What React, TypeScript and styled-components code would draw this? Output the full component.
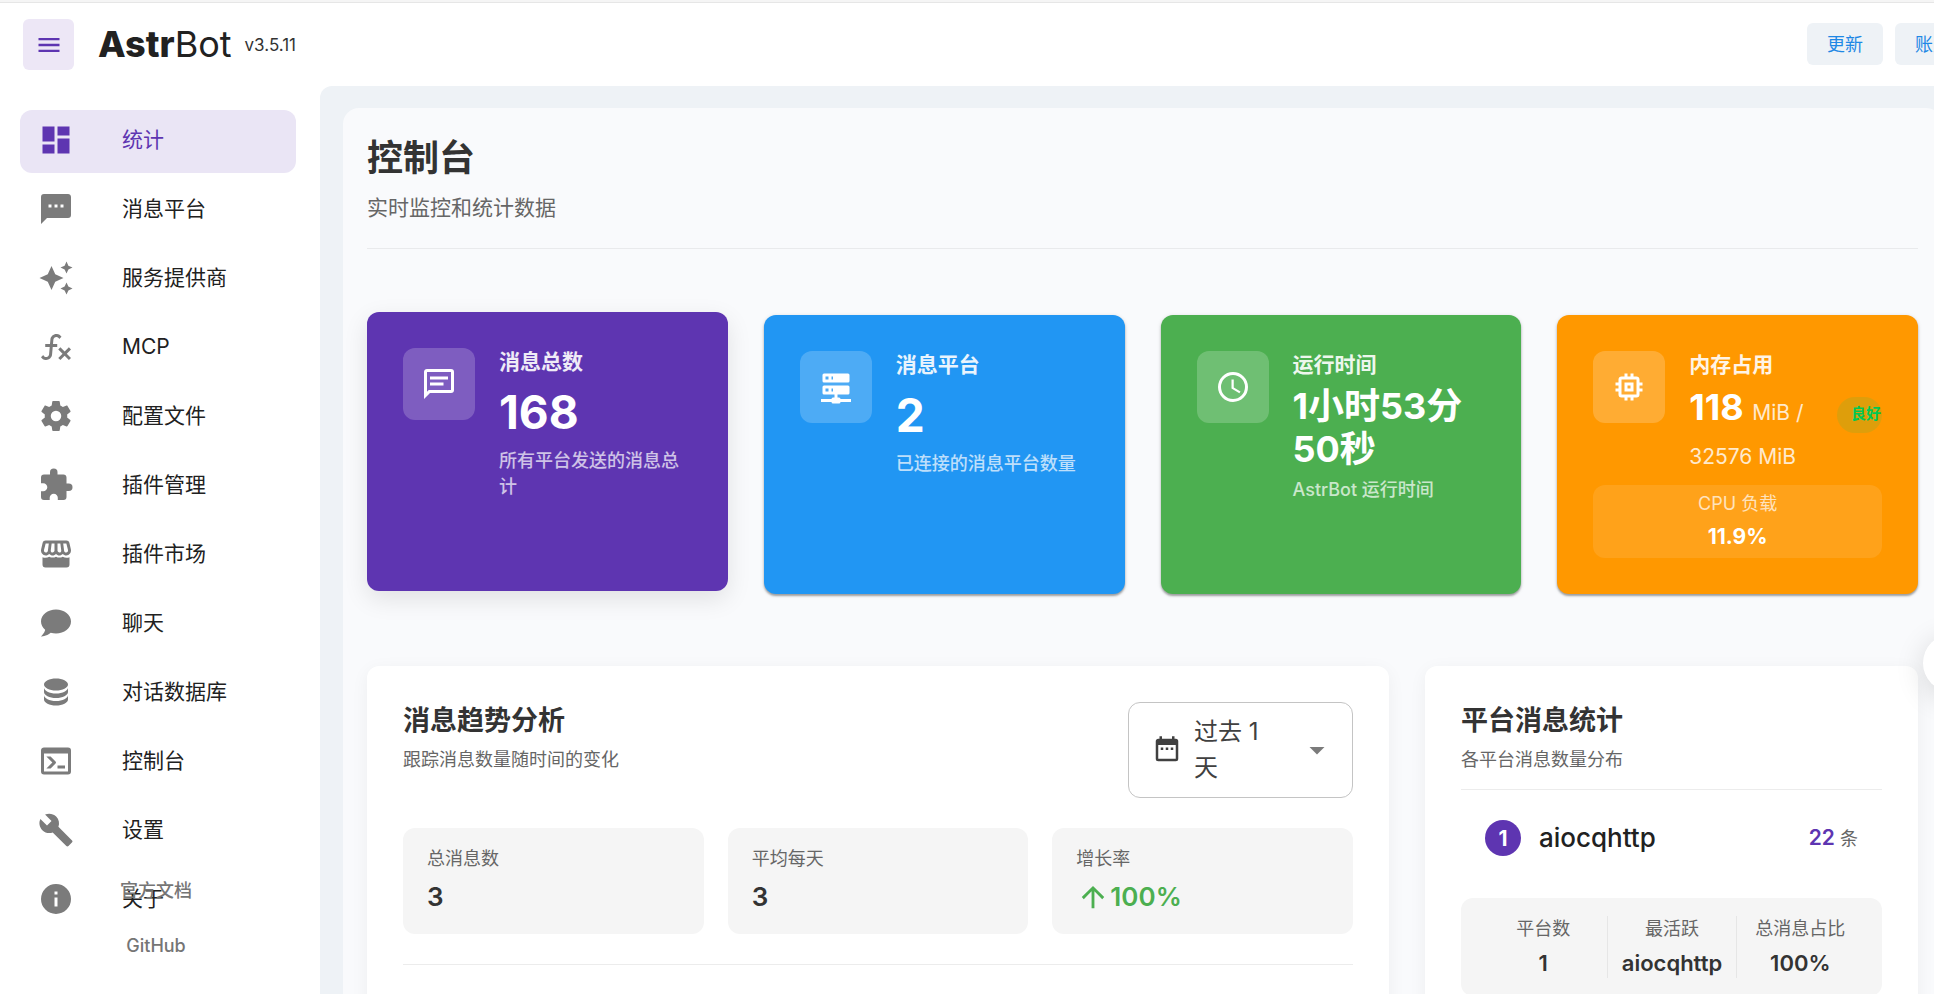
import React from 'react';
import styled, { createGlobalStyle, css } from 'styled-components';

const GlobalStyle = createGlobalStyle`
  *, *::before, *::after { box-sizing: border-box; }
  html, body { margin: 0; height: 100%; overflow: hidden; background: #fff; }
  body, button, select {
    font-family: Inter, "Noto Sans CJK SC", sans-serif;
  }
  h1, h2, p, ul, dl, dt, dd { margin: 0; padding: 0; }
  button { border: 0; cursor: pointer; }
`;

const icons = {
  menu: 'M3,6H21V8H3V6M3,11H21V13H3V11M3,16H21V18H3V16Z',
  dashboard: 'M13,3V9H21V3M13,21H21V11H13M3,21H11V15H3M3,13H11V3H3V13Z',
  message:
    'M17,11H15V9H17M13,11H11V9H13M9,11H7V9H9M20,2H4A2,2 0 0,0 2,4V22L6,18H20A2,2 0 0,0 22,16V4C22,2.89 21.1,2 20,2Z',
  creation:
    'M19,1L17.74,3.75L15,5L17.74,6.26L19,9L20.25,6.26L23,5L20.25,3.75M9,4L6.5,9.5L1,12L6.5,14.5L9,20L11.5,14.5L17,12L11.5,9.5M19,15L17.74,17.74L15,19L17.74,20.25L19,23L20.25,20.25L23,19L20.25,17.74',
  fx: 'M12.42,5.29C11.32,5.19 10.35,6 10.25,7.11L10,10H12.82V12H9.82L9.38,17.07C9.18,19.27 7.24,20.9 5.04,20.7C3.79,20.59 2.66,19.9 2,18.83L3.5,17.33C3.83,18.38 4.96,18.97 6,18.63C6.78,18.39 7.33,17.7 7.4,16.89L7.82,12H4.82V10H8L8.27,6.93C8.46,4.73 10.39,3.1 12.6,3.28C13.86,3.39 15,4.09 15.66,5.17L14.16,6.67C13.91,5.9 13.23,5.36 12.42,5.29M22,13.65L20.59,12.24L17.76,15.07L14.93,12.24L13.5,13.65L16.35,16.5L13.5,19.31L14.93,20.72L17.76,17.9L20.59,20.72L22,19.31L19.17,16.5L22,13.65Z',
  cog: 'M12,15.5A3.5,3.5 0 0,1 8.5,12A3.5,3.5 0 0,1 12,8.5A3.5,3.5 0 0,1 15.5,12A3.5,3.5 0 0,1 12,15.5M19.43,12.97C19.47,12.65 19.5,12.33 19.5,12C19.5,11.67 19.47,11.34 19.43,11L21.54,9.37C21.73,9.22 21.78,8.95 21.66,8.73L19.66,5.27C19.54,5.05 19.27,4.96 19.05,5.05L16.56,6.05C16.04,5.66 15.5,5.32 14.87,5.07L14.5,2.42C14.46,2.18 14.25,2 14,2H10C9.75,2 9.54,2.18 9.5,2.42L9.13,5.07C8.5,5.32 7.96,5.66 7.44,6.05L4.95,5.05C4.73,4.96 4.46,5.05 4.34,5.27L2.34,8.73C2.21,8.95 2.27,9.22 2.46,9.37L4.57,11C4.53,11.34 4.5,11.67 4.5,12C4.5,12.33 4.53,12.65 4.57,12.97L2.46,14.63C2.27,14.78 2.21,15.05 2.34,15.27L4.34,18.73C4.46,18.95 4.73,19.03 4.95,18.95L7.44,17.94C7.96,18.34 8.5,18.68 9.13,18.93L9.5,21.58C9.54,21.82 9.75,22 10,22H14C14.25,22 14.46,21.82 14.5,21.58L14.87,18.93C15.5,18.67 16.04,18.34 16.56,17.94L19.05,18.95C19.27,19.03 19.54,18.95 19.66,18.73L21.66,15.27C21.78,15.05 21.73,14.78 21.54,14.63L19.43,12.97Z',
  puzzle:
    'M20.5,11H19V7C19,5.89 18.1,5 17,5H13V3.5A2.5,2.5 0 0,0 10.5,1A2.5,2.5 0 0,0 8,3.5V5H4A2,2 0 0,0 2,7V10.8H3.5C5,10.8 6.2,12 6.2,13.5C6.2,15 5,16.2 3.5,16.2H2V20A2,2 0 0,0 4,22H7.8V20.5C7.8,19 9,17.8 10.5,17.8C12,17.8 13.2,19 13.2,20.5V22H17A2,2 0 0,0 19,20V16H20.5A2.5,2.5 0 0,0 23,13.5A2.5,2.5 0 0,0 20.5,11Z',
  storefront:
    'M5.1,3H18.9C19.9,3 20.6,3.6 20.9,4.5L21.9,8.9C22.4,11.1 20.9,13 18.8,13C17.9,13 17.1,12.6 16.5,12C15.9,12.6 15.1,13 14.2,13C13.3,13 12.6,12.6 12,12C11.4,12.6 10.7,13 9.8,13C8.9,13 8.1,12.6 7.5,12C6.9,12.6 6.1,13 5.2,13C3.1,13 1.6,11.1 2.1,8.9L3.1,4.5C3.4,3.6 4.1,3 5.1,3M5.1,5L4,9.4C3.8,10.3 4.4,11 5.2,11C6,11 6.5,10.5 6.6,9.8L7.2,5H5.1M9.1,5L8.5,9.6C8.4,10.4 8.9,11 9.7,11C10.4,11 11,10.4 11,9.7V5H9.1M13,5V9.7C13,10.4 13.6,11 14.3,11C15.1,11 15.6,10.4 15.5,9.6L14.9,5H13M16.8,5L17.4,9.8C17.5,10.5 18,11 18.8,11C19.6,11 20.2,10.3 20,9.4L18.9,5H16.8M3,14.1C4.6,14.7 6.2,14.5 7.5,13.8C9,14.6 10.6,14.6 12,13.8C13.4,14.6 15,14.6 16.5,13.8C17.8,14.5 19.4,14.7 21,14.1V19A2,2 0 0,1 19,21H5A2,2 0 0,1 3,19V14.1Z',
  chat: 'M12,3C17.5,3 22,6.58 22,11C22,15.42 17.5,19 12,19C10.76,19 9.57,18.82 8.47,18.5C5.55,21 2,21 2,21C4.33,18.67 4.7,17.1 4.75,16.5C3.05,15.07 2,13.13 2,11C2,6.58 6.5,3 12,3Z',
  database:
    'M12,3C7.58,3 4,4.79 4,7C4,9.21 7.58,11 12,11C16.42,11 20,9.21 20,7C20,4.79 16.42,3 12,3M4,9V12C4,14.21 7.58,16 12,16C16.42,16 20,14.21 20,12V9C20,11.21 16.42,13 12,13C7.58,13 4,11.21 4,9M4,14V17C4,19.21 7.58,21 12,21C16.42,21 20,19.21 20,17V14C20,16.21 16.42,18 12,18C7.58,18 4,16.21 4,14Z',
  console:
    'M20,19V7H4V19H20M20,3A2,2 0 0,1 22,5V19A2,2 0 0,1 20,21H4A2,2 0 0,1 2,19V5C2,3.89 2.9,3 4,3H20M13,17V15H18V17H13M9.58,13L5.57,9H8.4L11.7,12.3C12.09,12.69 12.09,13.33 11.7,13.72L8.42,17H5.59L9.58,13Z',
  wrench:
    'M22.7,19L13.6,9.9C14.5,7.6 14,4.9 12.1,3C10.1,1 7.1,0.6 4.7,1.7L9,6L6,9L1.6,4.7C0.4,7.1 0.9,10.1 2.9,12.1C4.8,14 7.5,14.5 9.8,13.6L18.9,22.7C19.3,23.1 19.9,23.1 20.3,22.7L22.6,20.4C23.1,20 23.1,19.3 22.7,19Z',
  info: 'M13,9H11V7H13M13,17H11V11H13M12,2A10,10 0 0,0 2,12A10,10 0 0,0 12,22A10,10 0 0,0 22,12A10,10 0 0,0 12,2Z',
  messageText:
    'M20,2A2,2 0 0,1 22,4V16A2,2 0 0,1 20,18H6L2,22V4C2,2.89 2.9,2 4,2H20M4,4V17.17L5.17,16H20V4H4M6,7H18V9H6V7M6,11H15V13H6V11Z',
  server:
    'M13,19H14A1,1 0 0,1 15,20H22V22H15A1,1 0 0,1 14,23H10A1,1 0 0,1 9,22H2V20H9A1,1 0 0,1 10,19H11V17H4A1,1 0 0,1 3,16V12A1,1 0 0,1 4,11H20A1,1 0 0,1 21,12V16A1,1 0 0,1 20,17H13V19M4,3H20A1,1 0 0,1 21,4V8A1,1 0 0,1 20,9H4A1,1 0 0,1 3,8V4A1,1 0 0,1 4,3M9,7H10V5H9V7M9,15H10V13H9V15M5,5V7H7V5H5M5,13V15H7V13H5Z',
  clock:
    'M12,20A8,8 0 0,0 20,12A8,8 0 0,0 12,4A8,8 0 0,0 4,12A8,8 0 0,0 12,20M12,2A10,10 0 0,1 22,12A10,10 0 0,1 12,22C6.47,22 2,17.5 2,12A10,10 0 0,1 12,2M12.5,7V12.25L17,14.92L16.25,16.15L11,13V7H12.5Z',
  memory:
    'M17,17H7V7H17M21,11V9H19V7C19,5.89 18.1,5 17,5H15V3H13V5H11V3H9V5H7C5.89,5 5,5.89 5,7V9H3V11H5V13H3V15H5V17A2,2 0 0,0 7,19H9V21H11V19H13V21H15V19H17A2,2 0 0,0 19,17V15H21V13H19V11M13,13H11V11H13M15,9H9V15H15V9Z',
  calendar:
    'M9,10H7V12H9V10M13,10H11V12H13V10M17,10H15V12H17V10M19,3H18V1H16V3H8V1H6V3H5C3.89,3 3,3.9 3,5V19A2,2 0 0,0 5,21H19A2,2 0 0,0 21,19V5A2,2 0 0,0 19,3M19,19H5V8H19V19Z',
  arrowUp: 'M13,20H11V8L5.5,13.5L4.08,12.08L12,4.16L19.92,12.08L18.5,13.5L13,8V20Z',
  caret: 'M7,10L12,15L17,10H7Z',
};

type IconName = keyof typeof icons;

const Svg = styled.svg`
  display: block;
  flex: none;
  fill: currentColor;
`;

const Icon = ({ name, size = 36 }: { name: IconName; size?: number }) => (
  <Svg width={size} height={size} viewBox="0 0 24 24" fillRule="evenodd" aria-hidden="true">
    <path d={icons[name]} />
  </Svg>
);

/* ---------- shell ---------- */

const Shell = styled.div`
  display: flex;
  flex-direction: column;
  width: calc(100% + 48px);
  height: 100vh;
  border-top: 2px solid #f5f5f5;
  color: #212121;
`;

const Header = styled.header`
  display: flex;
  flex: none;
  align-items: center;
  height: 84px;
  padding: 0 11px 0 23px;
  border-top: 1px solid #e6e6e6;
`;

const MenuButton = styled.button`
  display: grid;
  place-items: center;
  width: 51px;
  height: 51px;
  padding: 0;
  border-radius: 6px;
  background: #ede7f6;
  color: #5e35b1;
`;

const Brand = styled.h1`
  margin: 0 0 2px 24px;
  font-size: 36px;
  line-height: 48px;
  font-weight: 400;

  b {
    font-weight: 800;
  }
`;

const Version = styled.span`
  margin-left: 13px;
  font-size: 17px;
  line-height: 26px;
  color: #333;
`;

const HeaderActions = styled.div`
  display: flex;
  gap: 12px;
  margin: 0 0 1px auto;
`;

const HeaderButton = styled.button`
  height: 42px;
  padding: 0 20px 2px;
  border-radius: 6px;
  background: #eef2f6;
  color: #1e88e5;
  font-size: 18px;
  white-space: nowrap;
`;

const Body = styled.div`
  display: flex;
  flex: 1;
  min-height: 0;
`;

const Sidebar = styled.aside`
  position: relative;
  flex: none;
  width: 320px;
  padding: 24px 24px 0 20px;
`;

const NavList = styled.ul`
  display: flex;
  flex-direction: column;
  gap: 6px;
  list-style: none;
`;

const NavLink = styled.a<{ $active?: boolean }>`
  display: flex;
  align-items: center;
  gap: 48px;
  height: 63px;
  padding: 0 18px 3px;
  border-radius: 12px;
  font-size: 21px;
  line-height: 30px;
  text-decoration: none;
  color: #212121;

  svg {
    color: #7b7b7b;
  }

  ${(p) =>
    p.$active &&
    css`
      background: #eae5f5;
      color: #5e35b1;

      svg {
        color: #5e35b1;
      }
    `}
`;

const SidebarFooter = styled.div`
  position: absolute;
  left: 0;
  right: 8px;
  bottom: 21px;
  display: flex;
  flex-direction: column;
  align-items: center;
`;

const FooterLink = styled.a`
  display: flex;
  align-items: center;
  height: 55px;
  padding: 0 24px;
  font-size: 18px;
  line-height: 26px;
  font-weight: 500;
  text-decoration: none;
  color: #757575;
`;

const Main = styled.main`
  flex: 1;
  min-width: 0;
  padding: 22px 40px 0 23px;
  border-top-left-radius: 12px;
  background: #eef2f6;
  overflow: hidden;
`;

const Panel = styled.div`
  min-height: 100%;
  padding: 24px;
  border-radius: 16px;
  background: #f9fafc;
`;

const PageHead = styled.div`
  padding-bottom: 23px;
  border-bottom: 1px solid #e9eaec;
`;

const PageTitle = styled.h2`
  font-size: 36px;
  line-height: 52px;
  font-weight: 700;
  color: #333;
`;

const PageSubtitle = styled.p`
  margin-top: 7px;
  font-size: 21px;
  line-height: 34px;
  color: #666;
`;

/* ---------- stat cards ---------- */

const StatGrid = styled.section`
  display: grid;
  grid-template-columns: repeat(4, minmax(0, 1fr));
  gap: 36px;
  margin-top: 66px;
`;

const StatCard = styled.article<{ $color: string; $raised?: boolean }>`
  min-height: 279px;
  padding: 36px;
  border-radius: 12px;
  background: ${(p) => p.$color};
  color: #fff;
  box-shadow: 0 2px 2px rgba(0, 0, 0, 0.3), 0 1px 4px rgba(0, 0, 0, 0.14);

  ${(p) =>
    p.$raised &&
    css`
      transform: translateY(-3px);
      box-shadow: 0 8px 24px rgba(0, 0, 0, 0.1);
    `}
`;

const StatTop = styled.div`
  display: flex;
  align-items: flex-start;
  gap: 24px;
`;

const IconTile = styled.div`
  display: grid;
  flex: none;
  place-items: center;
  width: 72px;
  height: 72px;
  border-radius: 12px;
  background: rgba(255, 255, 255, 0.2);
`;

const StatText = styled.div`
  flex: 1;
  min-width: 0;
`;

const StatLabel = styled.div`
  height: 28px;
  margin-bottom: 6px;
  font-size: 21px;
  line-height: 28px;
  font-weight: 600;
  opacity: 0.9;
`;

const StatValue = styled.div<{ $large?: boolean }>`
  font-size: ${(p) => (p.$large ? 46 : 36)}px;
  line-height: ${(p) => (p.$large ? 60 : 43)}px;
  font-weight: 700;
`;

const StatNote = styled.p`
  margin-top: 6px;
  font-size: 18px;
  line-height: 26px;
  font-weight: 500;
  opacity: 0.7;
`;

const MemoryRow = styled.div`
  display: flex;
  align-items: flex-start;
`;

const MemoryValue = styled(StatValue)`
  flex: 1;
  min-width: 0;
  line-height: 44px;
`;

const Unit = styled.span`
  font-size: 21px;
  line-height: 24px;
  font-weight: 400;
  opacity: 0.8;
`;

const Chip = styled.span`
  flex: none;
  width: 45px;
  height: 36px;
  margin-top: 12px;
  padding-left: 14px;
  border-radius: 18px;
  background: rgba(0, 200, 83, 0.13);
  color: #00c853;
  font-size: 15px;
  line-height: 34px;
  font-weight: 600;
  white-space: nowrap;
  overflow: hidden;
`;

const LoadBox = styled.div`
  height: 73px;
  margin-top: 12px;
  padding-top: 3px;
  border-radius: 12px;
  background: rgba(255, 255, 255, 0.1);
  text-align: center;
`;

const LoadLabel = styled.div`
  font-size: 18px;
  line-height: 32px;
  opacity: 0.7;
`;

const LoadValue = styled.div`
  font-size: 21px;
  line-height: 34px;
  font-weight: 700;
`;

/* ---------- lower cards ---------- */

const ChartGrid = styled.section`
  display: grid;
  grid-template-columns: repeat(12, minmax(0, 1fr));
  gap: 36px;
  margin-top: 72px;
`;

const Card = styled.article<{ $span: number }>`
  grid-column: span ${(p) => p.$span};
  min-height: 720px;
  padding: 36px;
  border-radius: 12px;
  background: #fff;
  box-shadow: 0 4px 18px rgba(0, 0, 0, 0.05);
`;

const CardHead = styled.div`
  display: flex;
  justify-content: space-between;
  align-items: flex-start;
`;

const CardTitle = styled.h2`
  font-size: 27px;
  line-height: 38px;
  font-weight: 700;
  color: #333;
`;

const CardSubtitle = styled.p`
  margin-top: 6px;
  font-size: 18px;
  line-height: 28px;
  color: #666;
`;

const Divider = styled.hr<{ $top: number }>`
  height: 1px;
  margin: ${(p) => p.$top}px 0 0;
  border: 0;
  background: #ececec;
`;

const SelectBox = styled.label`
  position: relative;
  display: flex;
  align-items: center;
  width: 225px;
  height: 96px;
  padding: 0 17px 0 23px;
  border: 1px solid #c4c4c4;
  border-radius: 12px;
  color: #404040;
`;

const SelectText = styled.span`
  width: 72px;
  margin: 0 auto 0 12px;
  font-size: 24px;
  line-height: 36px;
`;

const Caret = styled.span`
  color: #7b7b7b;
`;

const NativeSelect = styled.select`
  position: absolute;
  inset: 0;
  width: 100%;
  height: 100%;
  opacity: 0;
  cursor: pointer;
`;

const MetricGrid = styled.dl`
  display: grid;
  grid-template-columns: repeat(3, minmax(0, 1fr));
  gap: 24px;
  margin-top: 30px;
`;

const Metric = styled.div`
  padding: 18px 24px 16px;
  border-radius: 12px;
  background: #f5f5f5;
`;

const MetricLabel = styled.dt`
  height: 26px;
  font-size: 18px;
  line-height: 26px;
  color: #666;
`;

const MetricValue = styled.dd<{ $up?: boolean }>`
  display: flex;
  align-items: center;
  margin-top: 4px;
  font-size: 26px;
  line-height: 42px;
  font-weight: 600;
  color: ${(p) => (p.$up ? '#4caf50' : '#333')};
`;

const PlatformRow = styled.div`
  display: flex;
  align-items: center;
  height: 96px;
  padding: 0 24px;
`;

const Rank = styled.span`
  display: grid;
  place-items: center;
  width: 36px;
  height: 36px;
  border-radius: 50%;
  background: #5e35b1;
  color: #fff;
  font-size: 21px;
  font-weight: 700;
`;

const PlatformName = styled.span`
  margin-left: 18px;
  font-size: 26px;
  line-height: 36px;
  font-weight: 500;
`;

const Count = styled.span`
  margin-left: auto;
  font-size: 18px;
  line-height: 30px;
  color: #666;

  b {
    font-size: 21px;
    font-weight: 600;
    color: #5e35b1;
  }
`;

const Summary = styled.dl`
  display: grid;
  grid-template-columns: repeat(3, minmax(0, 1fr));
  margin-top: 12px;
  padding: 18px;
  border-radius: 12px;
  background: #f5f5f5;
  text-align: center;

  div + div {
    border-left: 1px solid #e6e6e6;
  }
`;

const SummaryLabel = styled.dt`
  height: 26px;
  font-size: 18px;
  line-height: 26px;
  color: #666;
`;

const SummaryValue = styled.dd`
  margin-top: 6px;
  font-size: 22px;
  line-height: 30px;
  font-weight: 600;
  color: #333;
`;

const FloatingButton = styled.button`
  position: fixed;
  top: 634px;
  right: -47px;
  width: 58px;
  height: 58px;
  border-radius: 50%;
  background: #fff;
  box-shadow: 0 6px 30px rgba(0, 0, 0, 0.14);
`;

/* ---------- content ---------- */

const navItems: { icon: IconName; label: string }[] = [
  { icon: 'dashboard', label: '统计' },
  { icon: 'message', label: '消息平台' },
  { icon: 'creation', label: '服务提供商' },
  { icon: 'fx', label: 'MCP' },
  { icon: 'cog', label: '配置文件' },
  { icon: 'puzzle', label: '插件管理' },
  { icon: 'storefront', label: '插件市场' },
  { icon: 'chat', label: '聊天' },
  { icon: 'database', label: '对话数据库' },
  { icon: 'console', label: '控制台' },
  { icon: 'wrench', label: '设置' },
  { icon: 'info', label: '关于' },
];

const summary = [
  ['平台数', '1'],
  ['最活跃', 'aiocqhttp'],
  ['总消息占比', '100%'],
];

export default function App() {
  return (
    <>
      <GlobalStyle />
      <Shell>
        <Header>
          <MenuButton aria-label="菜单">
            <Icon name="menu" size={28} />
          </MenuButton>
          <Brand>
            <b>Astr</b>Bot
          </Brand>
          <Version>v3.5.11</Version>
          <HeaderActions>
            <HeaderButton>更新</HeaderButton>
            <HeaderButton>账户</HeaderButton>
          </HeaderActions>
        </Header>

        <Body>
          <Sidebar>
            <nav>
              <NavList>
                {navItems.map((item, i) => (
                  <li key={item.label}>
                    <NavLink href="#" $active={i === 0}>
                      <Icon name={item.icon} />
                      {item.label}
                    </NavLink>
                  </li>
                ))}
              </NavList>
            </nav>
            <SidebarFooter>
              <FooterLink href="#">官方文档</FooterLink>
              <FooterLink href="#">GitHub</FooterLink>
            </SidebarFooter>
          </Sidebar>

          <Main>
            <Panel>
              <PageHead>
                <PageTitle>控制台</PageTitle>
                <PageSubtitle>实时监控和统计数据</PageSubtitle>
              </PageHead>

              <StatGrid>
                <StatCard $color="#5e35b1" $raised>
                  <StatTop>
                    <IconTile>
                      <Icon name="messageText" />
                    </IconTile>
                    <StatText>
                      <StatLabel>消息总数</StatLabel>
                      <StatValue $large>168</StatValue>
                      <StatNote>所有平台发送的消息总计</StatNote>
                    </StatText>
                  </StatTop>
                </StatCard>

                <StatCard $color="#2196f3">
                  <StatTop>
                    <IconTile>
                      <Icon name="server" />
                    </IconTile>
                    <StatText>
                      <StatLabel>消息平台</StatLabel>
                      <StatValue $large>2</StatValue>
                      <StatNote>已连接的消息平台数量</StatNote>
                    </StatText>
                  </StatTop>
                </StatCard>

                <StatCard $color="#4caf50">
                  <StatTop>
                    <IconTile>
                      <Icon name="clock" />
                    </IconTile>
                    <StatText>
                      <StatLabel>运行时间</StatLabel>
                      <StatValue>1小时53分50秒</StatValue>
                      <StatNote>AstrBot 运行时间</StatNote>
                    </StatText>
                  </StatTop>
                </StatCard>

                <StatCard $color="#ff9800">
                  <StatTop>
                    <IconTile>
                      <Icon name="memory" />
                    </IconTile>
                    <StatText>
                      <StatLabel>内存占用</StatLabel>
                      <MemoryRow>
                        <MemoryValue>
                          118 <Unit>MiB / 32576 MiB</Unit>
                        </MemoryValue>
                        <Chip>良好</Chip>
                      </MemoryRow>
                    </StatText>
                  </StatTop>
                  <LoadBox>
                    <LoadLabel>CPU 负载</LoadLabel>
                    <LoadValue>11.9%</LoadValue>
                  </LoadBox>
                </StatCard>
              </StatGrid>

              <ChartGrid>
                <Card $span={8}>
                  <CardHead>
                    <div>
                      <CardTitle>消息趋势分析</CardTitle>
                      <CardSubtitle>跟踪消息数量随时间的变化</CardSubtitle>
                    </div>
                    <SelectBox>
                      <Icon name="calendar" size={30} />
                      <SelectText>过去 1 天</SelectText>
                      <Caret>
                        <Icon name="caret" />
                      </Caret>
                      <NativeSelect aria-label="时间范围" defaultValue="1">
                        <option value="1">过去 1 天</option>
                      </NativeSelect>
                    </SelectBox>
                  </CardHead>
                  <MetricGrid>
                    <Metric>
                      <MetricLabel>总消息数</MetricLabel>
                      <MetricValue>3</MetricValue>
                    </Metric>
                    <Metric>
                      <MetricLabel>平均每天</MetricLabel>
                      <MetricValue>3</MetricValue>
                    </Metric>
                    <Metric>
                      <MetricLabel>增长率</MetricLabel>
                      <MetricValue $up>
                        <Icon name="arrowUp" size={34} />
                        100%
                      </MetricValue>
                    </Metric>
                  </MetricGrid>
                  <Divider $top={30} />
                </Card>

                <Card $span={4}>
                  <CardTitle>平台消息统计</CardTitle>
                  <CardSubtitle>各平台消息数量分布</CardSubtitle>
                  <Divider $top={15} />
                  <PlatformRow>
                    <Rank>1</Rank>
                    <PlatformName>aiocqhttp</PlatformName>
                    <Count>
                      <b>22</b> 条
                    </Count>
                  </PlatformRow>
                  <Summary>
                    {summary.map(([label, value]) => (
                      <div key={label}>
                        <SummaryLabel>{label}</SummaryLabel>
                        <SummaryValue>{value}</SummaryValue>
                      </div>
                    ))}
                  </Summary>
                </Card>
              </ChartGrid>
            </Panel>
          </Main>
        </Body>
      </Shell>
      <FloatingButton aria-label="更多" />
    </>
  );
}
